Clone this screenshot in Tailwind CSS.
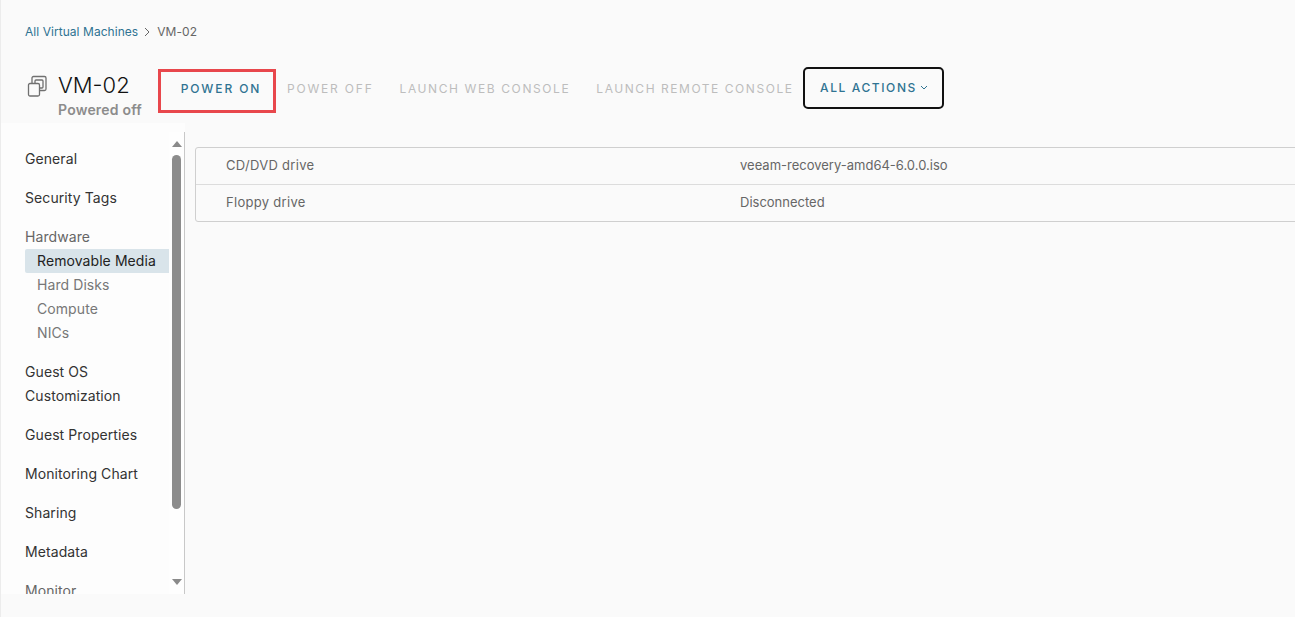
<!DOCTYPE html>
<html>
<head>
<meta charset="utf-8">
<script src="https://cdn.jsdelivr.net/npm/@tailwindcss/browser@4"></script>
</head>
<body class="m-0">
<div class="w-[1295px] h-[617px] overflow-hidden bg-[#fafafa] border-l border-[#ececec] font-['Inter','Open_Sans',sans-serif] flex flex-col">
  <nav class="h-[62px] pl-[24px] pt-[23px] flex items-start text-[12px] leading-[18px] tracking-[0.05px]">
    <a class="text-[#2f7392]">All Virtual Machines</a>
    <svg class="w-[8px] h-[10px] ml-[5px] mr-[6px] mt-[4px]" viewBox="0 0 8 10" fill="none" stroke="#666" stroke-width="1"><path d="M2 1l4 4-4 4"/></svg>
    <span class="text-[#666]">VM-02</span>
  </nav>
  <header class="h-[61px] flex items-start pl-[24px] shrink-0">
    <svg class="w-[24px] h-[24px] mt-[13px] mr-[9px] shrink-0" viewBox="0 0 24 24" fill="none" stroke="#707070" stroke-width="1.3">
      <rect x="7" y="1.5" width="14" height="14" rx="1.5"/>
      <rect x="10" y="5" width="8" height="8" rx="1"/>
      <rect x="3.5" y="8.5" width="11" height="12.5" rx="1.5" fill="#fafafa"/>
    </svg>
    <div class="w-[100px] shrink-0 pt-[9px]">
      <div class="text-[22px] leading-[28px] text-[#111] font-light">VM-02</div>
      <div class="text-[14px] leading-[22px] font-semibold text-[#8c8c8c] whitespace-nowrap tracking-[0.2px]">Powered off</div>
    </div>
    <div class="flex items-center mt-[5px] text-[12px] tracking-[1.6px] h-[42px] whitespace-nowrap">
      <button class="w-[118px] h-[44px] mt-[6px] border-[3px] border-[#e8474c] text-[#2f7392] font-medium tracking-[1.9px] mr-[11px] pb-[4px] pl-[8px]">POWER ON</button>
      <span class="text-[#bdbdbd] tracking-[1.8px] mr-[26px] mt-[2px]">POWER OFF</span>
      <span class="text-[#bdbdbd] mr-[26px] mt-[2px]">LAUNCH WEB CONSOLE</span>
      <span class="text-[#bdbdbd] tracking-[1.55px] mr-[9px] mt-[2px]">LAUNCH REMOTE CONSOLE</span>
      <button class="w-[141px] h-[42px] border-2 border-[#111] rounded-[5px] text-[#2f7392] font-medium flex items-center justify-center gap-[3px] pl-[2px]">
        ALL ACTIONS
        <svg class="w-[8px] h-[6px]" viewBox="0 0 8 6" fill="none" stroke="#2f7392" stroke-width="1"><path d="M1 1l3 3 3-3"/></svg>
      </button>
    </div>
  </header>
  <div class="flex h-[471px] items-start">
    <aside class="relative w-[184px] h-[471px] shrink-0 bg-[#fdfdfd] overflow-hidden">
      <div class="pl-[24px] pt-[24px] w-[168px] text-[14px] leading-[24px] text-[#333] tracking-[0.08px]">
        <div class="mb-[15px]">General</div>
        <div class="mb-[15px]">Security Tags</div>
        <div class="text-[#666]">Hardware</div>
        <div class="bg-[#d9e4ea] pl-[12px] text-[#222] rounded-l-[2px] whitespace-nowrap">Removable Media</div>
        <div class="pl-[12px] text-[#777]">Hard Disks</div>
        <div class="pl-[12px] text-[#777]">Compute</div>
        <div class="pl-[12px] text-[#777] mb-[15px]">NICs</div>
        <div class="mb-[15px]">Guest OS<br>Customization</div>
        <div class="mb-[15px]">Guest Properties</div>
        <div class="mb-[15px]">Monitoring Chart</div>
        <div class="mb-[15px]">Sharing</div>
        <div class="mb-[15px]">Metadata</div>
        <div class="text-[#666]">Monitor</div>
      </div>
      <div class="absolute top-[9px] right-0 w-[16px] h-[462px] border-r border-[#c8c8c8] bg-[#fefefe]"></div>
      <div class="absolute left-[171px] top-[18px] w-0 h-0 border-x-[5px] border-x-transparent border-b-[6px] border-b-[#8a8a8a]"></div>
      <div class="absolute left-[171px] top-[32px] w-[9px] h-[354px] rounded-full bg-[#8c8c8c]"></div>
      <div class="absolute left-[171px] top-[456px] w-0 h-0 border-x-[5px] border-x-transparent border-t-[6px] border-t-[#8a8a8a]"></div>
    </aside>
    <main class="flex-1 pl-[10px] pt-[24px] min-w-0">
      <div class="w-[1110px] border border-[#cfcfcf] rounded-[3px] text-[13px] leading-[18px] text-[#666]">
        <div class="h-[37px] flex items-center border-b border-[#dcdcdc] pb-[2px]">
          <div class="w-[544px] pl-[30px] shrink-0 tracking-[0.3px]">CD/DVD drive</div>
          <div>veeam-recovery-amd64-6.0.0.iso</div>
        </div>
        <div class="h-[36px] flex items-center pb-[2px]">
          <div class="w-[544px] pl-[30px] shrink-0 tracking-[0.3px]">Floppy drive</div>
          <div>Disconnected</div>
        </div>
      </div>
    </main>
  </div>
</div>
</body>
</html>
